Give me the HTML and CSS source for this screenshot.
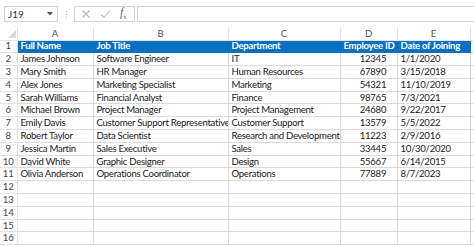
FILE: index.html
```html
<!DOCTYPE html>
<html lang="en">
<head>
	<meta charset="UTF-8">
	<title>Employees</title>
	<link rel="stylesheet" href="styles.css">
</head>
<body>

	<!-- Formula bar -->
	<div class="toolbar">
		<div class="namebox">
			<span>J19</span>
			<svg width="6" height="4" viewBox="0 0 6 4"><path d="M0 0h6L3 3.5z" fill="#555"/></svg>
		</div>
		<div class="grip"><i></i><i></i><i></i></div>
		<div class="fxbox">
			<svg width="10" height="10" viewBox="0 0 10 10"><path d="M1.5 1.5l7 7M8.5 1.5l-7 7" stroke="#b8b8b8" stroke-width="1.1" fill="none"/></svg>
			<svg width="11" height="10" viewBox="0 0 11 10"><path d="M1 5.5l3 3L10 1.5" stroke="#b8b8b8" stroke-width="1.1" fill="none"/></svg>
			<span class="fx"><i>f</i><sub>x</sub></span>
		</div>
		<div class="formula"></div>
	</div>

	<!-- Sheet -->
	<table class="sheet">
		<colgroup>
			<col class="c-row">
			<col class="c-a">
			<col class="c-b">
			<col class="c-c">
			<col class="c-d">
			<col class="c-e">
			<col>
		</colgroup>
		<thead>
			<tr>
				<th class="corner"><svg width="8" height="8" viewBox="0 0 8 8"><path d="M8 0v8H0z" fill="#d9d9d9"/></svg></th>
				<th>A</th><th>B</th><th>C</th><th>D</th><th>E</th><th class="rest"></th>
			</tr>
		</thead>
		<tbody id="rows">
			<tr class="head">
				<th>1</th>
				<td>Full Name</td><td>Job Title</td><td>Department</td><td>Employee ID</td><td>Date of Joining</td><td class="rest"></td>
			</tr>
		</tbody>
	</table>

	<script>
		let data = [
			["James Johnson", "Software Engineer", "IT", "12345", "1/1/2020"],
			["Mary Smith", "HR Manager", "Human Resources", "67890", "3/15/2018"],
			["Alex Jones", "Marketing Specialist", "Marketing", "54321", "11/10/2019"],
			["Sarah Williams", "Financial Analyst", "Finance", "98765", "7/3/2021"],
			["Michael Brown", "Project Manager", "Project Management", "24680", "9/22/2017"],
			["Emily Davis", "Customer Support Representative", "Customer Support", "13579", "5/5/2022"],
			["Robert Taylor", "Data Scientist", "Research and Development", "11223", "2/9/2016"],
			["Jessica Martin", "Sales Executive", "Sales", "33445", "10/30/2020"],
			["David White", "Graphic Designer", "Design", "55667", "6/14/2015"],
			["Olivia Anderson", "Operations Coordinator", "Operations", "77889", "8/7/2023"]
		];

		let rows = document.getElementById("rows");

		for (let i = 2; i <= 16; i++) {
			let r = data[i - 2] || ["", "", "", "", ""];
			let tr = document.createElement("tr");
			let html = "<th>" + i + "</th>";
			for (let j = 0; j < 5; j++) {
				html += '<td' + (j === 3 ? ' class="num"' : '') + '>' + r[j] + '</td>';
			}
			html += '<td class="rest"></td>';
			tr.innerHTML = html;
			rows.appendChild(tr);
		}
	</script>
</body>
</html>
```

FILE: styles.css
```css
* {
	box-sizing: border-box;
}

html,
body {
	margin: 0;
	background: #fff;
	overflow: hidden;
}

body {
	font-family: 'Lato', sans-serif;
	font-size: 9.6px;
	letter-spacing: -0.3px;
	color: #222;
}

/* Formula bar */

.toolbar {
	display: flex;
	align-items: center;
	height: 28px;
	padding: 0 0 0 4px;
	letter-spacing: 0;
}

.namebox {
	display: flex;
	align-items: center;
	justify-content: space-between;
	width: 54px;
	height: 16px;
	border: 1px solid #d4d4d4;
	padding: 0 4px 0 3px;
	color: #333;
	font-size: 10px;
}

.grip {
	display: flex;
	flex-direction: column;
	gap: 2px;
	margin: 0 7px 0 8px;
}

.grip i {
	display: block;
	width: 1px;
	height: 1px;
	background: #b0b0b0;
}

.fxbox {
	display: flex;
	align-items: center;
	gap: 9px;
	width: 61px;
	height: 16px;
	border: 1px solid #d4d4d4;
	padding: 0 6px;
}

.fx {
	color: #666;
	font-family: 'Liberation Serif', serif;
	font-size: 12px;
	line-height: 1;
}

.fx sub {
	font-size: 7px;
}

.formula {
	flex: 1;
	height: 16px;
	border: 1px solid #d4d4d4;
	border-right: none;
	margin-left: 2px;
}

/* Sheet */

.sheet {
	border-collapse: collapse;
	table-layout: fixed;
	width: 490px;
}

.c-row { width: 17px; }
.c-a { width: 76px; }
.c-b { width: 135px; }
.c-c { width: 112px; }
.c-d { width: 57px; }
.c-e { width: 73px; }

.sheet tr {
	height: 12.8px;
}

.sheet thead tr {
	height: 12px;
}

.sheet th,
.sheet td {
	padding: 0 0 0 3px;
	border: 1px solid #dadada;
	white-space: nowrap;
	overflow: hidden;
	line-height: 10px;
	font-weight: normal;
	text-align: left;
}

.sheet thead th {
	text-align: center;
	color: #555;
	font-size: 9.5px;
	letter-spacing: 0;
	padding: 0;
	border-top: none;
	border-color: #e2e2e2;
}

.sheet thead th.corner {
	text-align: right;
	padding-right: 1px;
	vertical-align: bottom;
	border-left: none;
}

.sheet tbody th {
	text-align: center;
	color: #444;
	letter-spacing: 0;
	padding: 0;
	border-left: none;
	border-color: #e2e2e2;
}

.sheet td.num {
	text-align: center;
	padding: 0 0 0 9px;
}

.head td {
	background: #0870c1;
	color: #fff;
	font-weight: bold;
	border-color: #0870c1;
}

.head td.rest {
	background: #fff;
	border-color: #dadada;
}

.head td.num {
	padding: 0 0 0 3px;
	text-align: left;
}
```
